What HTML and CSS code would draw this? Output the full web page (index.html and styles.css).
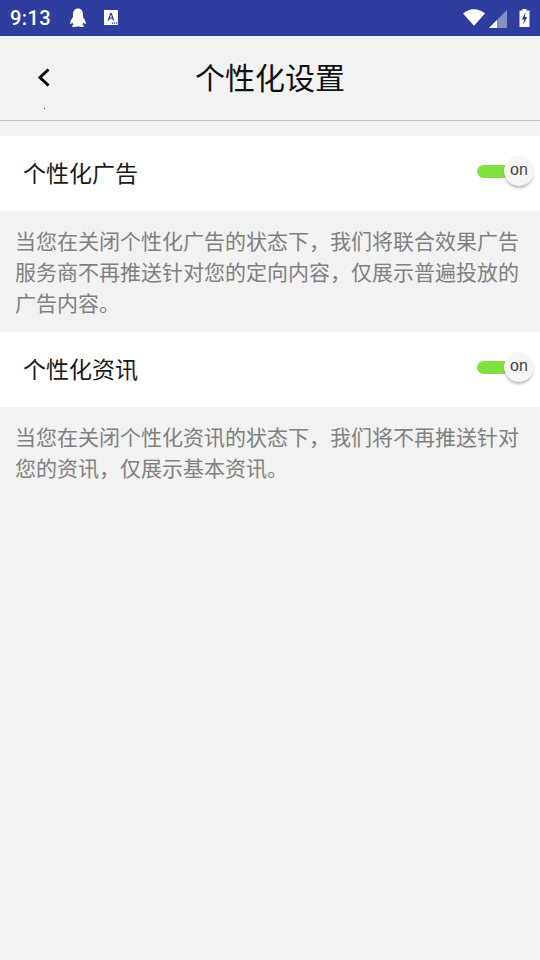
FILE: index.html
```html
<!DOCTYPE html>
<html lang="zh-CN">
<head>
<meta charset="utf-8">
<title>个性化设置</title>
<link rel="stylesheet" href="styles.css">
</head>
<body>
<div class="statusbar">
  <span class="time">9:13</span>
  <svg class="ic-qq" viewBox="0 0 18 20"><path d="M9 0.5C5.6 0.5 4.1 3.2 4 6.4L3.9 9.2C2.4 11 1 13.2 1.2 15.6C1.6 16.4 2.6 15.5 3.4 14.4C3.7 15.3 4.2 16 4.9 16.6C3.6 17 2.8 17.6 3.2 18.4C4.4 19.4 7.4 19.1 9 18.2C10.6 19.1 13.6 19.4 14.8 18.4C15.2 17.6 14.4 17 13.1 16.6C13.8 16 14.3 15.3 14.6 14.4C15.4 15.5 16.4 16.4 16.8 15.6C17 13.2 15.6 11 14.1 9.2L14 6.4C13.9 3.2 12.4 0.5 9 0.5Z" fill="#fff"/></svg>
  <svg class="ic-a" viewBox="0 0 16 16"><path d="M1 0H15V15H1Z" fill="#fff"/><path d="M4.6 10.5L7.2 3H8.8L11.4 10.5H9.9L9.4 8.8H6.6L6.1 10.5ZM7 7.6H9L8 4.6Z" fill="#2e3d9e"/><path d="M9 12.5h1.2v1.2H9ZM11 12.5h1.2v1.2H11ZM13 12.5h1.2v1.2H13Z" fill="#2e3d9e"/></svg>
  <span class="spacer"></span>
  <svg class="ic-wifi" viewBox="0 0 22 17"><path d="M0 4.5C3 1.8 6.8 0.2 11 0.2S19 1.8 22 4.5L11 16.8Z" fill="#fff"/></svg>
  <svg class="ic-signal" viewBox="0 0 18 18"><path d="M0 18L18 0V18Z" fill="#fff" fill-opacity=".42"/><path d="M0 18L8 10V18Z" fill="#fff"/></svg>
  <svg class="ic-batt" viewBox="0 0 11 18"><path d="M3.5 0H7.5V1.5H10.5V18H0.5V1.5H3.5Z" fill="#fff"/><path d="M6.5 3.5L2.8 10.5H5L4.2 15.5L8.2 8H6Z" fill="#2e3d9e"/></svg>
</div>
<header class="titlebar">
  <svg class="back" viewBox="0 0 14 20"><path d="M11.5 1.5L3 9.5L11.5 17.5" fill="none" stroke="#000" stroke-width="3"/></svg>
  <h1 class="title">个性化设置</h1>
  <span class="dot"></span>
</header>
<main>
  <section class="row">
    <span class="row-label">个性化广告</span>
    <span class="switch"><span class="track"></span><span class="knob">on</span></span>
  </section>
  <p class="desc">当您在关闭个性化广告的状态下，我们将联合效果广告服务商不再推送针对您的定向内容，仅展示普遍投放的广告内容。</p>
  <section class="row">
    <span class="row-label">个性化资讯</span>
    <span class="switch"><span class="track"></span><span class="knob">on</span></span>
  </section>
  <p class="desc">当您在关闭个性化资讯的状态下，我们将不再推送针对您的资讯，仅展示基本资讯。</p>
</main>
</body>
</html>
```
FILE: styles.css
```css
* { box-sizing: border-box; }
html, body { margin: 0; height: 100%; }
body {
  width: 540px;
  height: 960px;
  overflow: hidden;
  background: #f2f2f2;
  font-family: "Noto Sans CJK SC", "Noto Sans", sans-serif;
}
.statusbar {
  height: 36px;
  background: #2e3d9e;
  display: flex;
  align-items: center;
  padding: 0 10px 0 10px;
  color: #fff;
}
.time { font: 500 20px/1 Roboto, sans-serif; letter-spacing: .4px; width: 41px; }
.ic-qq { width: 18px; height: 20px; margin-left: 18px; }
.ic-a { width: 16px; height: 16px; margin-left: 16px; margin-top: -1px; }
.spacer { flex: 1; }
.ic-wifi { width: 22px; height: 17px; margin-top: -1px; }
.ic-signal { width: 18px; height: 18px; margin-left: 4px; margin-top: 1px; }
.ic-batt { width: 11px; height: 18px; margin-left: 12px; margin-top: -1px; }
.titlebar {
  position: relative;
  height: 85px;
  border-bottom: 1px solid #c4c4c4;
  display: flex;
  align-items: center;
  justify-content: center;
}
.back { position: absolute; left: 37px; top: 32px; width: 14px; height: 20px; }
.title {
  margin: -5px 0 0;
  font-size: 30px;
  line-height: 40px;
  font-weight: 400;
  color: #111;
}
.dot { position: absolute; left: 44px; top: 72px; width: 1px; height: 1px; background: #333; }
main { padding-top: 15px; }
.row {
  height: 75px;
  background: #fff;
  display: flex;
  align-items: center;
  justify-content: space-between;
  padding: 0 5px 0 23px;
}
.row-label { font-size: 23px; line-height: 30px; color: #1a1a1a; margin-top: -3px; }
.switch { position: relative; width: 58px; height: 34px; margin-top: -3px; }
.track {
  position: absolute; left: 0; top: 10px;
  width: 36px; height: 13px;
  border-radius: 7px;
  background: #7fe040;
}
.knob {
  position: absolute; left: 27px; top: 1px;
  width: 30px; height: 30px;
  border-radius: 50%;
  background: #f6f6f6;
  box-shadow: 0 3px 3px -1px rgba(0,0,0,.28);
  font: 16px/28px "Liberation Sans", sans-serif;
  text-align: center;
  color: #444;
}
.desc {
  margin: 0;
  padding: 14px 15px 14px;
  font-size: 21px;
  line-height: 31px;
  color: #808080;
}
```
